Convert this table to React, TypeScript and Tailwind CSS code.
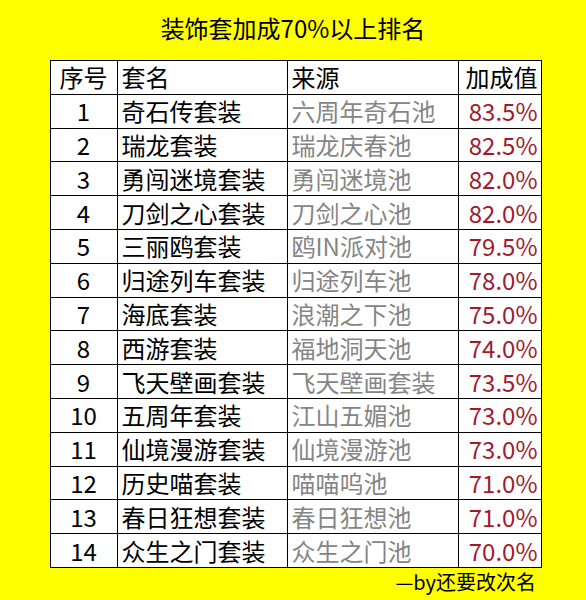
const rows: [number, string, string, string][] = [
  [1, '奇石传套装', '六周年奇石池', '83.5%'],
  [2, '瑞龙套装', '瑞龙庆春池', '82.5%'],
  [3, '勇闯迷境套装', '勇闯迷境池', '82.0%'],
  [4, '刀剑之心套装', '刀剑之心池', '82.0%'],
  [5, '三丽鸥套装', '鸥IN派对池', '79.5%'],
  [6, '归途列车套装', '归途列车池', '78.0%'],
  [7, '海底套装', '浪潮之下池', '75.0%'],
  [8, '西游套装', '福地洞天池', '74.0%'],
  [9, '飞天壁画套装', '飞天壁画套装', '73.5%'],
  [10, '五周年套装', '江山五媚池', '73.0%'],
  [11, '仙境漫游套装', '仙境漫游池', '73.0%'],
  [12, '历史喵套装', '喵喵呜池', '71.0%'],
  [13, '春日狂想套装', '春日狂想池', '71.0%'],
  [14, '众生之门套装', '众生之门池', '70.0%'],
];

export default function App() {
  return (
    <div
      className="w-[586px] h-[600px] bg-[#ffff00] flex flex-col items-center text-black"
      style={{ fontFamily: '"Noto Sans CJK SC", "Noto Sans", sans-serif' }}
    >
      <div className="h-[60px] flex items-center text-[24px] leading-none pb-1">
        装饰套加成70%以上排名
      </div>
      <table className="border-collapse bg-white w-[491px] ml-[5px] table-fixed text-[24px] leading-none">
        <colgroup>
          <col className="w-[67px]" />
          <col className="w-[170px]" />
          <col className="w-[171px]" />
          <col className="w-[83px]" />
        </colgroup>
        <thead>
          <tr className="h-[33.8px]">
            <th className="border border-black font-normal text-center p-0">序号</th>
            <th className="border border-black font-normal text-left pl-1">套名</th>
            <th className="border border-black font-normal text-left pl-1">来源</th>
            <th className="border border-black font-normal text-right pr-[3px]">加成值</th>
          </tr>
        </thead>
        <tbody>
          {rows.map(([n, name, src, val]) => (
            <tr key={n} className="h-[33.8px]">
              <td className="border border-black text-center p-0">{n}</td>
              <td className="border border-black pl-1 whitespace-nowrap">{name}</td>
              <td className="border border-black pl-1 text-[#858585] whitespace-nowrap">{src}</td>
              <td className="border border-black pr-[3px] text-right text-[#a31a2c]">{val}</td>
            </tr>
          ))}
        </tbody>
      </table>
      <div className="w-[491px] ml-[5px] flex justify-end pr-[5px] mt-[4px] text-[20px] leading-none">
        —by还要改次名
      </div>
    </div>
  );
}
